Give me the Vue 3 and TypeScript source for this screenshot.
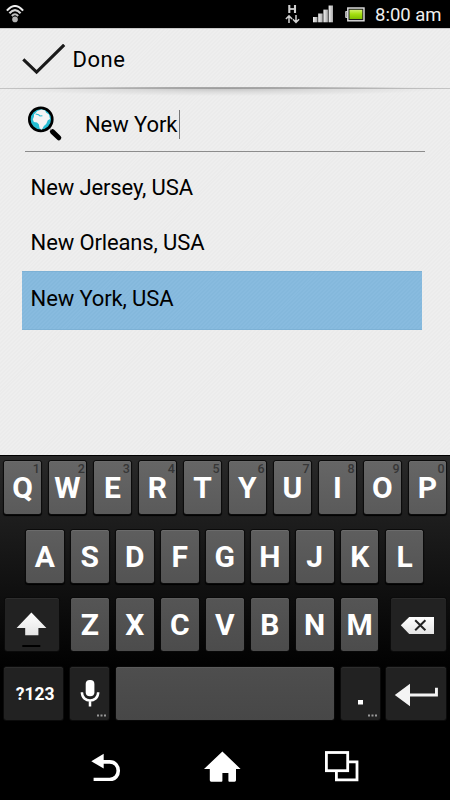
<script setup lang="ts">
import { ref } from 'vue'

interface Key {
  label: string
  hint?: string
}

const query = ref('New York')
const places: string[] = ['New Jersey, USA', 'New Orleans, USA', 'New York, USA']
const selected = ref(2)

const topRow: Key[] = [...'QWERTYUIOP'].map((label, i) => ({ label, hint: String((i + 1) % 10) }))
const homeRow: Key[] = [...'ASDFGHJKL'].map((label) => ({ label }))
const bottomRow: Key[] = [...'ZXCVBNM'].map((label) => ({ label }))
</script>

<template>
  <div class="screen">
    <header class="status">
      <svg class="wifi" width="18" height="19" viewBox="0 0 18 19" fill="none" stroke="#d4d4d4" stroke-width="2.1">
        <path d="M.9 5.6Q9-3.6 17.1 5.6" stroke="#eee" />
        <path d="M3.4 8.3Q9 2 14.6 8.3" />
        <path d="M5.9 11Q9 7.4 12.1 11" stroke="#c0c0c0" />
        <circle cx="9" cy="14.4" r="2.8" fill="#b5b5b5" stroke="none" />
      </svg>
      <div class="tray">
        <svg width="15" height="20" viewBox="0 0 15 20" fill="none" stroke="#d0d0d0">
          <path d="M4.3 1v8M10 1v8" stroke-width="2.1" />
          <path d="M4.3 5h5.7" stroke-width="1.8" />
          <path d="M4 19v-7M.9 15 4 11.9 7.1 15M11 11v7.3M7.9 15.3 11 18.4l3.1-3.1" stroke-width="1.5" />
        </svg>
        <svg class="signal" width="20" height="18" viewBox="0 0 20 18">
          <defs>
            <linearGradient id="bars" x2="1" y2="0">
              <stop offset="0" stop-color="#f2f2f2" /><stop offset="1" stop-color="#a8a8a8" />
            </linearGradient>
          </defs>
          <g fill="url(#bars)">
            <rect x="0" y="12" width="4.5" height="5.3" />
            <rect x="5.2" y="8.5" width="4.5" height="8.8" />
            <rect x="10.4" y="4.6" width="4.5" height="12.7" />
            <rect x="15.6" y=".5" width="4.4" height="16.8" />
          </g>
        </svg>
        <svg class="battery" width="20" height="15" viewBox="0 0 20 15">
          <defs>
            <linearGradient id="charge" x2="0" y2="1">
              <stop offset="0" stop-color="#d2f26a" /><stop offset=".45" stop-color="#a6e012" /><stop offset="1" stop-color="#7fc000" />
            </linearGradient>
          </defs>
          <path d="M3 4.5H.7v6H3" fill="#999" stroke="#ccc" />
          <rect x="2.8" y="1" width="16.2" height="12.8" fill="#222" stroke="#e2e2e2" stroke-width="1.4" />
          <rect x="4.5" y="2.8" width="12.8" height="9.2" fill="url(#charge)" />
        </svg>
        <span class="clock">8:00 am</span>
      </div>
    </header>

    <div class="action">
      <svg width="44" height="32" viewBox="0 0 44 32" fill="none" stroke="#1a1a1a" stroke-width="3.1">
        <path d="M1.3 15.4 14.6 28.2 42.2 .8" />
      </svg>
      <span>Done</span>
    </div>
    <div class="shadow"></div>

    <main class="content">
      <div class="search">
        <svg width="36" height="36" viewBox="0 0 36 36">
          <path d="m25.4 25.6 6.4 6.2" stroke="#000" stroke-width="5" stroke-linecap="round" />
          <path d="m22.5 22.2 1.8 1.8" stroke="#aaa" stroke-width="1.4" />
          <circle cx="13.8" cy="13.4" r="11.5" fill="#27bdd3" stroke="#000" stroke-width="2.6" />
          <path d="M7 8.5 10.4 5l4-1.4 3.8 1 .8 1.8 3 2.2 1 4.3-2.2 1.4-1.6 3.8-2.3 1.8-2.1 3.8-2.2-1.4-.8-4-1.8-1.8-3.1-.4-1.1-2.6 1.2-3z" fill="#f4f4f4" />
          <path d="m8.6 8 3 .8 1.4 1.2 2.4-.3" fill="none" stroke="#27bdd3" stroke-width="1.1" />
        </svg>
        <span class="query">{{ query }}</span>
        <i class="caret"></i>
      </div>
      <ul class="results">
        <li v-for="(place, i) in places" :key="place" :class="{ selected: i === selected }" @click="selected = i">
          <span>{{ place }}</span>
        </li>
      </ul>
    </main>

    <section class="keyboard">
      <div class="row top">
        <button v-for="key in topRow" :key="key.label" class="key">
          {{ key.label }}<small>{{ key.hint }}</small>
        </button>
      </div>
      <div class="row home">
        <button v-for="key in homeRow" :key="key.label" class="key">{{ key.label }}</button>
      </div>
      <div class="row letters">
        <button class="key dark shift">
          <svg width="53" height="53" viewBox="0 0 53 53">
            <defs>
              <linearGradient id="glyph" x2="0" y2="1"><stop offset="0" stop-color="#fff" /><stop offset="1" stop-color="#e4e4e4" /></linearGradient>
            </defs>
            <path d="M26.4 14.6 41.4 30h-8v7.3H20.2V30h-8.6z" fill="url(#glyph)" />
            <rect x="17.3" y="47" width="18" height="2" fill="#000" />
          </svg>
        </button>
        <div class="group">
          <button v-for="key in bottomRow" :key="key.label" class="key">{{ key.label }}</button>
        </div>
        <button class="key dark delete">
          <svg width="55" height="53" viewBox="0 0 55 53">
            <path d="M9.8 27.3 18.2 19H43v17H18.2z" fill="url(#glyph)" />
            <path d="m24.2 22.3 10.2 10M34.4 22.3l-10.2 10" stroke="#222" stroke-width="2" />
          </svg>
        </button>
      </div>
      <div class="row controls">
        <button class="key dark symbols">?123</button>
        <button class="key dark mic">
          <svg width="39" height="53" viewBox="0 0 39 53">
            <rect x="15.7" y="13" width="8.7" height="16.3" rx="4.1" fill="#fff" />
            <path d="M11.9 25.3c0 11 16.3 11 16.3 0M20 33.5v6" fill="none" stroke="#fff" stroke-width="2.5" />
            <path d="M27 48.5h9" stroke="#999" stroke-width="2" stroke-dasharray="2 1.5" />
          </svg>
        </button>
        <button class="key space" aria-label="Space"></button>
        <button class="key dark period">
          <svg width="39" height="53" viewBox="0 0 39 53">
            <rect x="17" y="33" width="5" height="4.5" fill="#fff" />
            <path d="M27 48.5h9" stroke="#999" stroke-width="2" stroke-dasharray="2 1.5" />
          </svg>
        </button>
        <button class="key dark enter">
          <svg width="60" height="53" viewBox="0 0 60 53" fill="#f4f4f4">
            <path d="M8.8 28 24 16.8v9.7h25v-5.7h2.9v8.7H24v9.7z" />
          </svg>
        </button>
      </div>
    </section>

    <nav class="nav">
      <svg width="31" height="30" viewBox="0 0 31 30">
        <path d="M.3 10.3 12.7 2.8v14.8z" fill="#fff" />
        <path d="M11.7 10.9h7c11.4 0 11.4 17.6 0 17.6H2.6" fill="none" stroke="#fff" stroke-width="3.6" />
      </svg>
      <svg class="house" width="37" height="31" viewBox="0 0 37 31">
        <path d="M18.4.4 36.6 18H32v11.3q0 1.4-1.4 1.4h-5.3q-.9 0-.9-.9V22h-6v7.8q0 .9-.9.9H7.2q-1.4 0-1.4-1.4V18H0z" fill="#fff" />
      </svg>
      <svg width="34" height="31" viewBox="0 0 34 31" fill="none" stroke="#fff" stroke-width="2.8">
        <path d="M23 10.8h9v18.1H11.4V20" />
        <rect x="1.4" y="1.5" width="21.3" height="18.2" />
      </svg>
    </nav>
  </div>
</template>

<style>
body {
  background: #000;
}
</style>

<style scoped>
.screen {
  width: 450px;
  height: 800px;
  overflow: hidden;
  display: flex;
  flex-direction: column;
  font-family: Roboto, sans-serif;
  color: #000;
  background: repeating-linear-gradient(135deg, #eee 0 1.4px, #ebebeb 1.4px 2.8px);
}
svg {
  display: block;
  flex: none;
}
.status {
  flex: none;
  height: 28px;
  display: flex;
  justify-content: space-between;
  background: #000;
}
.wifi {
  margin: 5px 0 0 6px;
}
.tray {
  display: flex;
  padding: 4px 8px 0 0;
}
.signal {
  margin: 1px 0 0 13px;
}
.battery {
  margin: 3px 0 0 12px;
}
.clock {
  width: 67px;
  margin-left: 10px;
  color: #eee;
  font-size: 18.5px;
  line-height: 23px;
  white-space: nowrap;
}
.action {
  flex: none;
  box-sizing: border-box;
  height: 59px;
  display: flex;
  gap: 6.5px;
  padding: 15px 0 0 22px;
  border-top: 1px solid #c8c8c8;
  font-size: 22px;
  line-height: 32px;
  letter-spacing: 0.5px;
}
.shadow {
  flex: none;
  height: 9px;
  background:
    linear-gradient(90deg, transparent 10%, #a6a6a6 40%, #a6a6a6 60%, transparent 90%) 0 0 / 100% 1px no-repeat,
    linear-gradient(90deg, #c4c4c4, #9c9c9c 50%, #c4c4c4) 0 1px / 100% 1px no-repeat,
    radial-gradient(ellipse 225px 8px at 50% 1px, #c2c2c2, #dcdcdc 50%, transparent);
}
.content {
  flex: none;
  height: 359px;
}
.search {
  box-sizing: border-box;
  height: 56px;
  margin: 0 25px;
  padding: 10px 0 0 2px;
  display: flex;
  border-bottom: 1px solid #8c8c8c;
}
.query {
  margin-left: 22px;
  font-size: 22px;
  line-height: 38px;
  letter-spacing: -0.08px;
}
.caret {
  width: 1px;
  height: 29px;
  margin: 4px 0 0 1.5px;
  background: #777;
}
.results {
  list-style: none;
  margin: 9px 28px 0 22px;
  padding: 0;
  font-size: 22px;
  letter-spacing: -0.13px;
}
.results li {
  box-sizing: border-box;
  height: 55px;
  padding-left: 8.6px;
  line-height: 54px;
}
.results .selected {
  height: 59px;
  line-height: 53px;
  background: repeating-linear-gradient(135deg, #88bbdf 0 1.4px, #84b8dc 1.4px 2.8px);
  border: solid #7db1d5;
  border-width: 1px 0;
}
.keyboard {
  flex: none;
  box-sizing: border-box;
  height: 273px;
  padding-top: 5px;
  display: flex;
  flex-direction: column;
  gap: 15.6px;
  border-top: 1px solid #000;
  background: linear-gradient(#292929, #000 80%);
}
.row {
  display: flex;
  gap: 7.4px;
  height: 53px;
}
.top {
  padding-left: 3.7px;
}
.home {
  padding-left: 26px;
}
.letters {
  padding-left: 5px;
  gap: 12.4px;
}
.group {
  display: flex;
  gap: 7.4px;
}
.controls {
  gap: 7px;
  padding-left: 4px;
}
.key {
  flex: none;
  position: relative;
  width: 37.6px;
  height: 53px;
  padding: 0;
  border: 0;
  border-radius: 2.5px;
  color: #fff;
  font: 700 30px/54px Roboto, sans-serif;
  background: linear-gradient(#5e5e5e, #535353);
  box-shadow: 0 0 0 1px #0b0b0b, 0 1px 1px 1px #000, inset 0 1px #6b6b6b;
}
.top .key {
  background: linear-gradient(#666, #5a5a5a);
}
.letters .key {
  background: linear-gradient(#555, #4c4c4c);
  box-shadow: 0 0 0 1px #090909, inset 0 1px #5d5d5d;
}
.key small {
  position: absolute;
  top: 0;
  right: 1.5px;
  color: #363636;
  font-size: 12.5px;
  font-weight: 500;
  line-height: 16px;
}
.row .key.dark {
  background: #222;
  box-shadow: 0 0 0 1px #0b0b0b, inset 0 1px #2d2d2d;
}
.key.shift {
  width: 53.6px;
}
.key.delete {
  width: 55px;
}
.key.symbols {
  width: 58.5px;
  margin-right: 0.5px;
  padding-left: 4px;
  font-size: 17.5px;
}
.key.mic,
.key.period {
  width: 39px;
}
.key.space {
  width: 218px;
  background: linear-gradient(#4e4e4e, #474747);
  box-shadow: 0 0 0 1px #080808, inset 0 1px #5a5a5a;
}
.key.enter {
  width: 60px;
  margin-left: -1px;
}
.nav {
  flex: 1;
  display: flex;
  justify-content: space-between;
  align-items: flex-start;
  padding: 23px 91px 0 91px;
  background: #000;
}
.house {
  margin-right: 3px;
}
</style>
